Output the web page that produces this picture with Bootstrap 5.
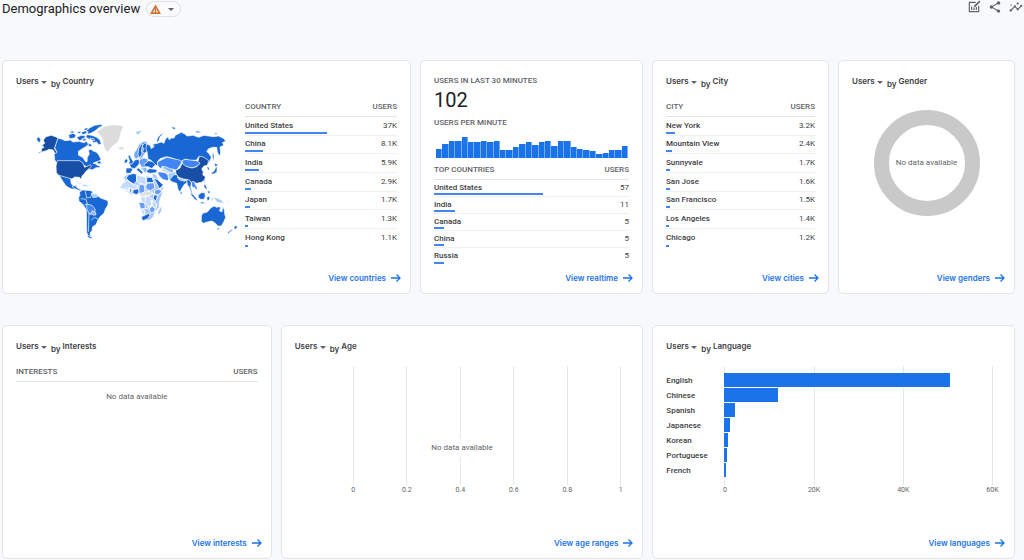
<!DOCTYPE html>
<html lang="en">
<head>
<meta charset="utf-8">
<meta name="viewport" content="width=device-width, initial-scale=1">
<title>Demographics overview</title>
<link href="https://cdn.jsdelivr.net/npm/bootstrap@5.3.0/dist/css/bootstrap.min.css" rel="stylesheet">
<style>
  :root { --ink:#3c4043; --muted:#5f6368; --blue:#1a73e8; --rule:#e3e5e8; --brand:Inter,"Open Sans",sans-serif; }
  body { background:#f8f9fb; color:var(--ink); font:400 8px/10px Roboto,sans-serif; }
  .topbar { height:18px; padding:0 1px 0 2px; margin-bottom:42px; }
  .topbar h1 { font:400 13px/18px Roboto,sans-serif; color:#202124; }
  .status-btn { height:16px; border:1px solid #dfe1e8; background:#fafafc; padding:0 6px 0 3px; line-height:1; gap:7px; margin-left:6px; }
  .status-btn svg, .tool-btn svg, .view-link svg { display:block; }
  .tool-btn { padding:0; border:0; background:none; color:var(--muted); line-height:1; }
  .tools { gap:7px; }
  .board { display:grid; gap:9px; padding:0 9px 0 2px; }
  .board-top { grid-template-columns:409fr 223fr 177fr 177fr; margin-bottom:31px; }
  .board-bottom { grid-template-columns:270fr 363fr 363fr; }
  .panel { background:#fff; border:1px solid #e2e4e9; border-radius:5px; min-height:234px; padding:15px 13px 9px; min-width:0; }
  .panel-title { font:600 8px/10px var(--brand); height:12px; margin:0 0 10px; display:flex; align-items:flex-start; }
  .panel-title .by { padding-top:3px; margin:0 2px 0 4px; }
  .metric { appearance:none; border:0; padding:0 8px 0 0; margin:0; font:inherit; color:inherit; background:
     url("data:image/svg+xml,%3Csvg xmlns='http://www.w3.org/2000/svg' viewBox='0 0 6 3'%3E%3Cpath fill='%235f6368' d='M0 0h6L3 3z'/%3E%3C/svg%3E") no-repeat right 0 top 5px / 6px 3px; }
  .report { width:100%; border-collapse:collapse; }
  .report th, .report td { padding:0; vertical-align:middle; font-weight:500; }
  .report td { font-weight:400; }
  .report th:last-child, .report td:last-child { text-align:right; }
  .report thead th { height:18px; color:var(--muted); border-bottom:1px solid var(--rule); }
  .report tbody tr { position:relative; height:19px; border-bottom:1px solid #eff0f2; }
  .report-roomy tbody tr:nth-child(3n+2) { height:18px; }
  .report tbody tr:last-child { border-bottom:0; }
  .report.report-tight tr, .report.report-tight thead th { height:17px; }
  .share-bar { position:absolute; left:0; bottom:0; height:2px; background:#4285f4; }
  .map-col { flex:229 1 0; min-width:0; }
  .table-col { flex:152 1 0; min-width:0; }
  .map-col svg { display:block; width:100%; margin-top:12px; }
  .eyebrow { font:500 8px/10px Roboto,sans-serif; color:var(--muted); margin:0; }
  .big-number { font:400 20px/24px Roboto,sans-serif; color:#202124; margin:2px 0 6px; }
  .minutes { height:21px; margin:9px 1px 0 2px; display:flex; align-items:flex-end; }
  .minutes div { flex:1; background:var(--blue); border-right:1px solid #76abf1; }
  .view-link { font:600 8px/12px var(--brand); color:var(--blue); text-decoration:none; gap:5px; margin-right:-4px; }
  .ring { width:106px; height:106px; border:15px solid #c9c9c9; border-radius:50%; margin-top:12px; }
  .empty { color:var(--muted); }
  .no-rows { padding-top:10px; }
  .plot { display:grid; grid-template-columns:58px 1fr; margin:3px 8px 0 0; }
  .gridlines { grid-area:1/2; height:119px; display:flex; justify-content:space-between; }
  .gridlines div { width:1px; background:#e6e7e9; }
  .ticks { grid-area:2/2; display:flex; justify-content:space-between; color:var(--muted); font-size:7px; }
  .ticks span { width:1px; display:flex; justify-content:center; white-space:nowrap; }
  .plot-note { grid-area:1/2; justify-self:center; align-self:end; background:#fff; padding:5px 0; margin:0 50px 27px 0; z-index:1; }
  .names { grid-area:1/1; padding-top:7px; font-weight:500; }
  .names div, .bars div { height:15px; line-height:15px; }
  .bars { grid-area:1/2; padding-top:7px; z-index:1; }
  .bars div { background:var(--blue); border-bottom:1px solid #fff; }
</style>
</head>
<body>
<header class="topbar d-flex align-items-center">
  <h1 class="m-0">Demographics overview</h1>
  <button class="status-btn rounded-pill d-flex align-items-center" type="button" aria-label="Data quality">
    <svg width="11" height="11" viewBox="0 0 24 24" fill="#c5611f" stroke="#c5611f"><path d="M12 5.99 19.53 19H4.47L12 5.99M12 2 1 21h22L12 2zm-1 8h2v5h-2zm0 6h2v2h-2z"/><path fill="none" d="M12 6 19.500 19h-15z"/></svg>
    <svg width="6" height="3" viewBox="0 0 6 3" fill="#5f6368"><path d="M0 0h6L3 3z"/></svg>
  </button>
  <div class="tools ms-auto d-flex align-self-start">
    <button class="tool-btn" type="button" aria-label="Customize report"><svg width="14" height="14" viewBox="0 0 24 24" fill="currentColor"><path d="M3 3h12v2H5v14h14V10h2v11H3zM7 11h2v6H7zm4 2h2v4h-2zm4-1h2v5h-2zM12 10l7-7 2-2 2 2-2 2-7 7h-2z"/></svg></button>
    <button class="tool-btn" type="button" aria-label="Share"><svg width="14" height="14" viewBox="0 0 24 24" fill="currentColor"><path d="M18 16.08c-.76 0-1.44.3-1.96.77L8.91 12.7c.05-.23.09-.46.09-.7s-.04-.47-.09-.7l7.05-4.11c.54.5 1.25.81 2.04.81 1.66 0 3-1.34 3-3s-1.34-3-3-3-3 1.34-3 3c0 .24.04.47.09.7L8.04 9.81C7.5 9.31 6.79 9 6 9c-1.66 0-3 1.34-3 3s1.34 3 3 3c.79 0 1.5-.31 2.04-.81l7.12 4.16c-.05.21-.08.43-.08.65 0 1.61 1.31 2.92 2.92 2.92s2.92-1.31 2.92-2.92-1.31-2.92-2.92-2.92z"/></svg></button>
    <button class="tool-btn" type="button" aria-label="Insights"><svg width="14" height="14" viewBox="0 0 24 24" fill="currentColor"><path d="M21 8c-1.45 0-2.26 1.44-1.93 2.51l-3.55 3.56c-.3-.09-.74-.09-1.04 0l-2.55-2.55C12.27 10.45 11.46 9 10 9c-1.45 0-2.27 1.44-1.93 2.52l-4.56 4.55C2.44 15.74 1 16.55 1 18c0 1.1.9 2 2 2 1.45 0 2.26-1.44 1.93-2.51l4.55-4.56c.3.09.74.09 1.04 0l2.55 2.55C12.73 16.55 13.54 18 15 18c1.45 0 2.27-1.44 1.93-2.52l3.56-3.55C21.56 12.26 23 11.45 23 10c0-1.1-.9-2-2-2zM15 9l.94-2.07L18 6l-2.06-.93L15 3l-.92 2.07L12 6l2.08.93zM3.5 11L4 9l2-.5L4 8l-.5-2L3 8l-2 .5L3 9z"/></svg></button>
  </div>
</header>

<main>
<div class="board board-top">
  <section class="panel d-flex flex-column">
    <h2 class="panel-title"><select class="metric" aria-label="Country metric"><option>Users</option></select><span class="by">by</span>Country</h2>
    <div class="d-flex">
      <div class="map-col">
        <svg viewBox="-12 0 687 420" role="img" aria-label="Users by country map" stroke="#fff" stroke-width="2" stroke-linejoin="round">
          <!-- North America -->
          <g fill="#1967d2">
            <path d="M113 84l14 4 8 4 16-2 8 6 18-2 14 4 10-4 4 10-8 6-10 6-12 8 1 12 12 6 8 12 5 2 1-14 6-10-3-12 8-2 8 6 8 2 8 10 6 12-6 6-10 2-8 4 10 2 2 4 10 2-4 5-10 0-4 4-8 2-8-2-12-10-14-4H112l-8-14-2-18 8-6-6-12z"/>
            <path d="M116 192l14 2 14 2 8 12 2 14 8 6 8-4-2 10-4 4-12-2-14-8-8-12-8-12z"/>
            <path d="M156 228l12 0 4 6 10 4 2 4-10-2-14-6z"/>
            <path d="M208 54l16-8 20-3 4 4-12 6-8 8-14 8-12 4 2-8-8-2z"/>
            <path d="M146 74l14-4 8 6-4 8-16 2zM170 82l14-6 12 2-2 8-16 6zM182 68l14-6 6 6-12 6zM200 74l16 2 14 6 10 8 4 12-8 2-6-8-10 2-4-8-12-4-6-6zM190 58l10-5 6 4-10 4zM148 66l10-3 6 3-8 4zM172 66l8-2 4 4-8 3zM206 100l10 4-2 6-10-2zM186 86l8-2 5 6-8 4zM230 158l8-6 7 8-8 2zM210 84l12 2 2 6-10-2z"/>
            <path d="M50 86l6-6 6 8-2 10-8-4zM55 128l10-6 8-3-8 7-12 6z"/>
          </g>
          <path fill="#174ea6" d="M64 116l8-4-6-6 8-6-4-10 8-10 16-4 12 4 8 4-11 32 8 10-4 6-8-12-12-2-8 4-14 4z"/>
          <path fill="#174ea6" d="M112 152L178 152 188 158 194 172 212 164 214 169 206 177 198 184 192 192 186 198 184 208 178 202 164 201 156 207 146 204 132 200 116 196 109 188 108 168z"/>
          <path fill="#dcdcdc" d="M230 66l12-10 14-8 24-4 22 2 10 4-8 12-4 18-6 16-18 14-12 16-8-6-6-14-2-18-6-10zM296 112l10-2 8 4-8 6-10-2z"/>
          <g fill="#a8c7fa"><path d="M164 216l12 0 10 5-2 2-10-4zM188 223l16 1-2 5-14-1zM206 226l5 0 0 2-5 0zM36 219l3 1-1 3z"/></g>
          <!-- South America -->
          <path fill="#1967d2" d="M178 246L188 240 214 242 222 252 234 258 242 264 264 272 264 284 256 298 252 310 240 320 232 334 228 344 218 350 216 362 210 370 212 380 204 378 200 366 199 300 190 284 177 274 176 262 180 256z"/>
          <path fill="none" d="M196 244l4 20 12-2 4-14M182 266l16 2 4 14-8 2M216 262l14-4M203 308l8 6 14-8M214 330l10-8 10 6M207 310l-2 56"/>
          <path fill="#4285f4" d="M200 282l16 4 10 12-2 8-10 6-8-4-6-12z"/>
          <path fill="#8ab4f8" d="M216 302l10 4 2 8-8 2-6-6z"/>
          <path fill="#a8c7fa" d="M214 250l14 2 6 4-4 6-10 0z"/>
          <path fill="#1967d2" d="M202 375l7 4 10 5-6 2-10-4z"/>
          <!-- Europe -->
          <path fill="#76a7f9" d="M342 130l8-12 8-16 14-8 10 2-4 14 4 14-8 8-6 8-6 10-6-8-6 4-8-2z"/>
          <path fill="#1967d2" d="M356 116l8-14 4 2-4 16 2 10-6 14-6-10zM324 138l5-4 4 10 8 12-4 6-12 0 4-8zM314 150l6-4 4 6-6 8-6-2zM318 174h18l2 4-6 12-14 0z"/>
          <path fill="#1967d2" d="M328 164l10-4 6-10 10-2 6 6-4 10-6 6-6 6-10-2zM366 108l10-10 6 8 0 18-10 6-4-6 4-8z"/>
          <path fill="#669df6" d="M358 150l12-6 12 2 4 18-10 10-12-4-6-10z"/>
          <path fill="#1967d2" d="M372 164l14-12 16 4 6 8-8 6-4 6-12-6-10 0z"/>
          <path fill="#1967d2" d="M350 176l6-2 6 6 8 8-6 4-6-6-8-6zM362 172l10 2 0 4-8 0z"/>
          <path fill="#8ab4f8" d="M366 174l10-2 6 6-4 12-6-4-4-6z"/>
          <path fill="#1967d2" d="M380 182l8-6 18 2 6 4-4 6-18 2-8-2z"/>
          <path fill="#a8c7fa" d="M346 66l12-4 10 0-8 6-8 8z"/>
          <!-- Russia and Asia -->
          <path fill="#1967d2" d="M380 102L390 106 394 116 402 110 398 103 412 100 424 96 432 100 436 88 444 80 448 90 453 84 462 84 466 76 484 67 494 72 502 78 520 76 536 82 552 76 580 80 596 78 612 86 617 94 607 98 612 106 600 111 602 130 598 138 592 126 590 112 578 112 566 116 560 124 568 132 574 142 568 156 559 166 556 154 546 142 536 140 530 150 510 152 496 147 484 154 470 150 462 146 440 140 420 146 412 156 414 170 402 160 392 150 384 148 382 130 378 116z"/>
          <path fill="#1967d2" d="M410 92l4-10 10-10 6-1-10 10-4 12-4 4zM454 50l10 2 4 4-8 2zM524 62l14 2 6 4-12 0zM584 68l8 2-2 3-6-1zM578 124l4 12 0 16-5-10z"/>
          <path fill="#4285f4" d="M412 156l12-6 16-8 20 4 18 4 8 6-6 10-10 14-14-2-8 2-12-6-8-6-6 8-8-8z"/>
          <path fill="#4285f4" d="M486 152l10-4 14 2 18 2 10 2 2 8-12 8-12 4-18-4-10-6z"/>
          <path fill="#174ea6" d="M466 182L480 174 486 160 500 170 516 174 530 170 540 160 534 154 538 138 552 142 566 152 562 166 552 168 545 177 550 186 548 194 556 200 554 210 544 217 530 220 522 217 512 217 504 209 490 207 476 202 468 192z"/>
          <path fill="#8ab4f8" d="M424 172l14-2 12 6 12 2-4 12-8 6-10-2-8-10z"/>
          <path fill="#dcdcdc" d="M422 178l10-2 10 6 10 6-6 6-12-6z"/>
          <path fill="#4285f4" d="M412 186l10 0 12 2 10 6 2 14-4 4-14-4-10-10z"/>
          <path fill="#a8c7fa" d="M444 190l14-2 8-4 2 8-10 16-12 2z"/>
          <path fill="#1967d2" d="M450 208L462 194 470 194 475 203 490 210 502 212 500 220 494 222 486 234 480 247 474 238 470 220 460 217 451 212z"/>
          <path fill="#8ab4f8" d="M472 202l22 8 0 4-16-4z"/>
          <path fill="#1967d2" d="M398 204l12 2 8 8 6 6 6 4-6 8-12 8-8-14-6-12z"/>
          <path fill="#8ab4f8" d="M412 242l12-6 4-6 4 2-6 10-10 4z"/>
          <path fill="#a8c7fa" d="M396 192l10 0 8 12 2 6-10-4-8-2z"/>
          <path fill="#1967d2" d="M500 208l8 2 6 8-2 12 4 16 4 8-6-4-6-18-6-8z"/>
          <path fill="#4285f4" d="M514 216l8-2 4 10 6 10-4 8-4-10-8 0zM482 244l5 4-3 6-4-4z"/>
          <path fill="#1967d2" d="M510 248l10 6 10 12 4 8-10-6-10-12zM534 256l10-8 10 0 2 10-4 10-10 0-6-4zM536 276l12 0 12 4-12 1zM560 262l10-4-2 12-6 2zM552 222l6 4 4 12-6-2-4-6zM563 242l7 2 0 6-6 0zM560 170l7 2 2 10-6-4zM574 188l8-4 6-14 3 2 0 14-8 5-8 2zM582 160l8 2 4 4-8 4zM552 214l4-4-2 8z"/>
          <path fill="#a8c7fa" d="M580 262l12 2 12 6 10 10-10-2-10 0-8-8zM574 262l6 0-2 12-4-2zM620 270l6 4-4 2z"/>
          <!-- Africa -->
          <g stroke-width="2.5">
            <path fill="#a8c7fa" d="M310 202l10-8 10-4 20 0 4 6 14 6 12-4 18 2 10 16 8 16 6 8 6 2-2 12-6 16-2 12 0 10-12 14-6 14-10 10-12 2-6-10-6-20 2-20-4-14 0-14-8-2-12 2-14-2-16-10-4-14 6-14z"/>
            <path fill="#1967d2" d="M318 204l8-10 16-4 8 4 0 20-10 8-16-10zM380 202h16l6 16-22 0zM340 238l16-2 2 10-8 8-12-4zM402 254l10 2-2 12-4 4-6-6zM364 320l10-4 12-6 4 6-6 10-14 6-4-4z"/>
            <path fill="#669df6" d="M358 222l16 4 0 22-14 4-4-10zM378 220l24-2 2 16-12 8-14-4zM356 276l18 2 2 16-14 4zM404 240l12-2 10 4-10 12-12-2zM328 234l8 2-2 12-6-2zM388 296l10-8 8 8-4 10-10 4z"/>
            <path fill="#dcdcdc" d="M358 252l16-6 16-2 8 8-6 4-18 0-14 4z"/>
            <path fill="#c6dafc" d="M300 230l10-12 12-8 18 14 14 2-2 10-16 2-4-4-10 8-12-2-8-2zM350 196l26 4 4 24-22-4-8-6zM362 262l24-4 12 10-4 20-10 4-6-12-14-4zM362 298l10 0 4 14-8 4zM392 272l12 2 6 8-2 14-8-4z"/>
            <path fill="none" d="M300 236h14l2 12M320 232l2 18M386 292l12-8M374 296l14 0M376 256v18M396 244l6 12M326 232v16"/>
          </g>
          <path fill="#a8c7fa" d="M414 304l8-12 4-2-2 14-6 10-5-2z"/>
          <!-- Oceania -->
          <path fill="#1967d2" d="M544 318L548 310 562 306 572 294 582 288 590 292 598 290 602 294 598 302 606 306 608 289 613 300 614 312 617 322 612 334 604 348 594 348 586 340 576 333 562 336 550 340 544 334zM592 354l7 0-3 6-4-1z"/>
          <path fill="#1967d2" d="M644 346l4 2 6 2-8 8-4-2zM640 357l-6 6-9 8-2-3 10-9z"/>
        </svg>
      </div>
      <div class="table-col">
        <table class="report report-roomy">
          <thead><tr><th>COUNTRY</th><th>USERS</th></tr></thead>
          <tbody>
            <tr><th>United States<div class="share-bar" style="width:54%"></div></th><td>37K</td></tr>
            <tr><th>China<div class="share-bar" style="width:12%"></div></th><td>8.1K</td></tr>
            <tr><th>India<div class="share-bar" style="width:9%"></div></th><td>5.9K</td></tr>
            <tr><th>Canada<div class="share-bar" style="width:4%"></div></th><td>2.9K</td></tr>
            <tr><th>Japan<div class="share-bar" style="width:3%"></div></th><td>1.7K</td></tr>
            <tr><th>Taiwan<div class="share-bar" style="width:2%"></div></th><td>1.3K</td></tr>
            <tr><th>Hong Kong<div class="share-bar" style="width:2%"></div></th><td>1.1K</td></tr>
          </tbody>
        </table>
      </div>
    </div>
    <a class="view-link d-flex align-items-center align-self-end mt-auto" href="#">View countries <svg width="10" height="8" viewBox="0 0 10 8" fill="none" stroke="currentColor" stroke-width="1.3"><path d="M0 4h9M5.5.5 9 4 5.5 7.5"/></svg></a>
  </section>

  <section class="panel d-flex flex-column">
    <h2 class="eyebrow">USERS IN LAST 30 MINUTES</h2>
    <p class="big-number">102</p>
    <h3 class="eyebrow">USERS PER MINUTE</h3>
    <div class="minutes" role="img" aria-label="Users per minute">
      <div style="height:45%"></div><div style="height:69%"></div><div style="height:81%"></div><div style="height:81%"></div><div style="height:100%"></div><div style="height:76%"></div><div style="height:76%"></div><div style="height:81%"></div><div style="height:76%"></div><div style="height:81%"></div><div style="height:40%"></div><div style="height:36%"></div><div style="height:52%"></div><div style="height:69%"></div><div style="height:76%"></div><div style="height:64%"></div><div style="height:76%"></div><div style="height:81%"></div><div style="height:57%"></div><div style="height:81%"></div><div style="height:81%"></div><div style="height:52%"></div><div style="height:45%"></div><div style="height:40%"></div><div style="height:33%"></div><div style="height:17%"></div><div style="height:26%"></div><div style="height:40%"></div><div style="height:40%"></div><div style="height:57%"></div>
    </div>
    <table class="report report-tight mt-1">
      <thead><tr><th>TOP COUNTRIES</th><th>USERS</th></tr></thead>
      <tbody>
        <tr><th>United States<div class="share-bar" style="width:56%"></div></th><td>57</td></tr>
        <tr><th>India<div class="share-bar" style="width:11%"></div></th><td>11</td></tr>
        <tr><th>Canada<div class="share-bar" style="width:5%"></div></th><td>5</td></tr>
        <tr><th>China<div class="share-bar" style="width:5%"></div></th><td>5</td></tr>
        <tr><th>Russia<div class="share-bar" style="width:5%"></div></th><td>5</td></tr>
      </tbody>
    </table>
    <a class="view-link d-flex align-items-center align-self-end mt-auto" href="#">View realtime <svg width="10" height="8" viewBox="0 0 10 8" fill="none" stroke="currentColor" stroke-width="1.3"><path d="M0 4h9M5.5.5 9 4 5.5 7.5"/></svg></a>
  </section>

  <section class="panel d-flex flex-column">
    <h2 class="panel-title"><select class="metric" aria-label="City metric"><option>Users</option></select><span class="by">by</span>City</h2>
    <table class="report report-roomy">
      <thead><tr><th>CITY</th><th>USERS</th></tr></thead>
      <tbody>
        <tr><th>New York<div class="share-bar" style="width:6%"></div></th><td>3.2K</td></tr>
        <tr><th>Mountain View<div class="share-bar" style="width:4%"></div></th><td>2.4K</td></tr>
        <tr><th>Sunnyvale<div class="share-bar" style="width:3%"></div></th><td>1.7K</td></tr>
        <tr><th>San Jose<div class="share-bar" style="width:3%"></div></th><td>1.6K</td></tr>
        <tr><th>San Francisco<div class="share-bar" style="width:3%"></div></th><td>1.5K</td></tr>
        <tr><th>Los Angeles<div class="share-bar" style="width:2%"></div></th><td>1.4K</td></tr>
        <tr><th>Chicago<div class="share-bar" style="width:2%"></div></th><td>1.2K</td></tr>
      </tbody>
    </table>
    <a class="view-link d-flex align-items-center align-self-end mt-auto" href="#">View cities <svg width="10" height="8" viewBox="0 0 10 8" fill="none" stroke="currentColor" stroke-width="1.3"><path d="M0 4h9M5.5.5 9 4 5.5 7.5"/></svg></a>
  </section>

  <section class="panel d-flex flex-column">
    <h2 class="panel-title"><select class="metric" aria-label="Gender metric"><option>Users</option></select><span class="by">by</span>Gender</h2>
    <div class="ring empty d-flex align-items-center justify-content-center align-self-center">No data available</div>
    <a class="view-link d-flex align-items-center align-self-end mt-auto" href="#">View genders <svg width="10" height="8" viewBox="0 0 10 8" fill="none" stroke="currentColor" stroke-width="1.3"><path d="M0 4h9M5.5.5 9 4 5.5 7.5"/></svg></a>
  </section>
</div>

<div class="board board-bottom">
  <section class="panel d-flex flex-column">
    <h2 class="panel-title"><select class="metric" aria-label="Interests metric"><option>Users</option></select><span class="by">by</span>Interests</h2>
    <table class="report">
      <thead><tr><th>INTERESTS</th><th>USERS</th></tr></thead>
    </table>
    <p class="empty no-rows text-center m-0">No data available</p>
    <a class="view-link d-flex align-items-center align-self-end mt-auto" href="#">View interests <svg width="10" height="8" viewBox="0 0 10 8" fill="none" stroke="currentColor" stroke-width="1.3"><path d="M0 4h9M5.5.5 9 4 5.5 7.5"/></svg></a>
  </section>

  <section class="panel d-flex flex-column">
    <h2 class="panel-title"><select class="metric" aria-label="Age metric"><option>Users</option></select><span class="by">by</span>Age</h2>
    <div class="plot">
      <div class="gridlines"><div></div><div></div><div></div><div></div><div></div><div></div></div>
      <div class="plot-note empty">No data available</div>
      <div class="ticks"><span>0</span><span>0.2</span><span>0.4</span><span>0.6</span><span>0.8</span><span>1</span></div>
    </div>
    <a class="view-link d-flex align-items-center align-self-end mt-auto" href="#">View age ranges <svg width="10" height="8" viewBox="0 0 10 8" fill="none" stroke="currentColor" stroke-width="1.3"><path d="M0 4h9M5.5.5 9 4 5.5 7.5"/></svg></a>
  </section>

  <section class="panel d-flex flex-column">
    <h2 class="panel-title"><select class="metric" aria-label="Language metric"><option>Users</option></select><span class="by">by</span>Language</h2>
    <div class="plot">
      <div class="names"><div>English</div><div>Chinese</div><div>Spanish</div><div>Japanese</div><div>Korean</div><div>Portuguese</div><div>French</div></div>
      <div class="gridlines"><div></div><div></div><div></div><div></div></div>
      <div class="bars">
        <div style="width:84%"></div><div style="width:20%"></div><div style="width:4%"></div><div style="width:2%"></div><div style="width:1.5%"></div><div style="width:1.1%"></div><div style="width:.6%"></div>
      </div>
      <div class="ticks"><span>0</span><span>20K</span><span>40K</span><span>60K</span></div>
    </div>
    <a class="view-link d-flex align-items-center align-self-end mt-auto" href="#">View languages <svg width="10" height="8" viewBox="0 0 10 8" fill="none" stroke="currentColor" stroke-width="1.3"><path d="M0 4h9M5.5.5 9 4 5.5 7.5"/></svg></a>
  </section>
</div>
</main>
<script src="https://cdn.jsdelivr.net/npm/bootstrap@5.3.0/dist/js/bootstrap.bundle.min.js"></script>
</body>
</html>
